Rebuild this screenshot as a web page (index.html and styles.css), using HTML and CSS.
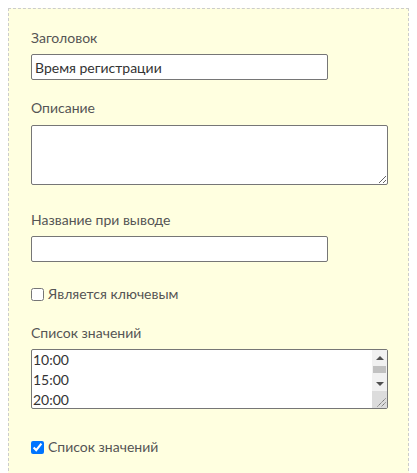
FILE: index.html
```html
<!DOCTYPE html>
<html lang="ru">
<head>
<meta charset="utf-8">
<title>Форма</title>
<link rel="stylesheet" href="styles.css">
</head>
<body>
<div class="panel">
  <label class="lbl" for="f1">Заголовок</label>
  <input class="inp" id="f1" type="text" value="Время регистрации">

  <label class="lbl lbl-2" for="f2">Описание</label>
  <textarea class="area" id="f2"></textarea>

  <label class="lbl lbl-3" for="f3">Название при выводе</label>
  <input class="inp" id="f3" type="text" value="">

  <label class="chk chk-1"><input type="checkbox" class="box"><span>Является ключевым</span></label>

  <label class="lbl lbl-4" for="f4">Список значений</label>
  <div class="list-wrap">
    <textarea class="area area-list" id="f4">10:00
15:00
20:00
21:00
22:00
23:00</textarea>
    <div class="sb" aria-hidden="true">
      <div class="sb-btn"><span class="tri tri-up"></span></div>
      <div class="sb-track"><div class="sb-thumb"></div></div>
      <div class="sb-btn"><span class="tri tri-down"></span></div>
      <div class="sb-corner">
        <svg class="grip" width="17" height="17" viewBox="0 0 17 17">
          <line x1="15.5" y1="7.5" x2="7.5" y2="15.5" stroke="#6a6a6a" stroke-width="1" stroke-dasharray="1.4 0.6"/>
          <line x1="15.5" y1="11.5" x2="11.5" y2="15.5" stroke="#6a6a6a" stroke-width="1" stroke-dasharray="1.4 0.6"/>
        </svg>
      </div>
    </div>
  </div>

  <label class="chk chk-2"><input type="checkbox" class="box" checked><span>Список значений</span></label>
</div>
</body>
</html>
```
FILE: styles.css
```css
html, body {
  margin: 0;
  padding: 0;
  background: #ffffff;
}
body {
  padding: 8px;
  font-family: Lato, "Open Sans", sans-serif;
  font-size: 14px;
  color: #555555;
}
.panel {
  display: flex;
  flex-direction: column;
  align-items: flex-start;
  background: #ffffe0;
  border: 1px dashed #cccccc;
  padding: 21px 22px 40px 22px;
  min-height: 480px;
  box-sizing: border-box;
}
.lbl {
  display: block;
  line-height: 16px;
  height: 16px;
  margin-bottom: 8px;
}
.lbl-2 { margin-top: 20px; margin-bottom: 9px; }
.lbl-3 { margin-top: 27px; }
.lbl-4 { margin-top: 23px; }
.inp {
  box-sizing: border-box;
  width: 297px;
  height: 26px;
  margin: 0;
  border: 1px solid #767676;
  border-radius: 2px;
  padding: 1px 3px;
  font-family: inherit;
  font-size: 14px;
  color: #333;
  background: #fff;
}
.area {
  display: block;
  box-sizing: border-box;
  width: 357px;
  height: 60px;
  margin: 0;
  border: 1px solid #767676;
  border-radius: 2px;
  padding: 0 1px;
  font-family: inherit;
  font-size: 14px;
  line-height: 20px;
  color: #333;
  background: #fff;
}
.list-wrap {
  position: relative;
  width: 357px;
  height: 60px;
}
.area-list {
  overflow: hidden;
  resize: none;
}
.sb {
  position: absolute;
  top: 1px;
  right: 1px;
  bottom: 1px;
  width: 15px;
  display: flex;
  flex-direction: column;
  background: #f1f1f1;
}
.sb-btn {
  height: 15px;
  display: flex;
  align-items: center;
  justify-content: center;
}
.sb-track {
  flex: 1;
  display: flex;
  flex-direction: column;
  align-items: center;
}
.sb-thumb {
  width: 13px;
  height: 7px;
  margin-top: 1px;
  background: #c1c1c1;
}
.tri {
  width: 0;
  height: 0;
  border-left: 4px solid transparent;
  border-right: 4px solid transparent;
}
.tri-up { border-bottom: 4px solid #505050; }
.tri-down { border-top: 4px solid #505050; }
.sb-corner {
  height: 17px;
  background: #dcdcdc;
  position: relative;
}
.grip {
  position: absolute;
  right: 0;
  bottom: 0;
}
.chk {
  display: flex;
  align-items: center;
  gap: 4px;
  height: 16px;
  line-height: 16px;
}
.chk-1 { margin-top: 24px; }
.chk-2 { margin-top: 30px; }
.box {
  width: 13px;
  height: 13px;
  margin: 0;
}
```
